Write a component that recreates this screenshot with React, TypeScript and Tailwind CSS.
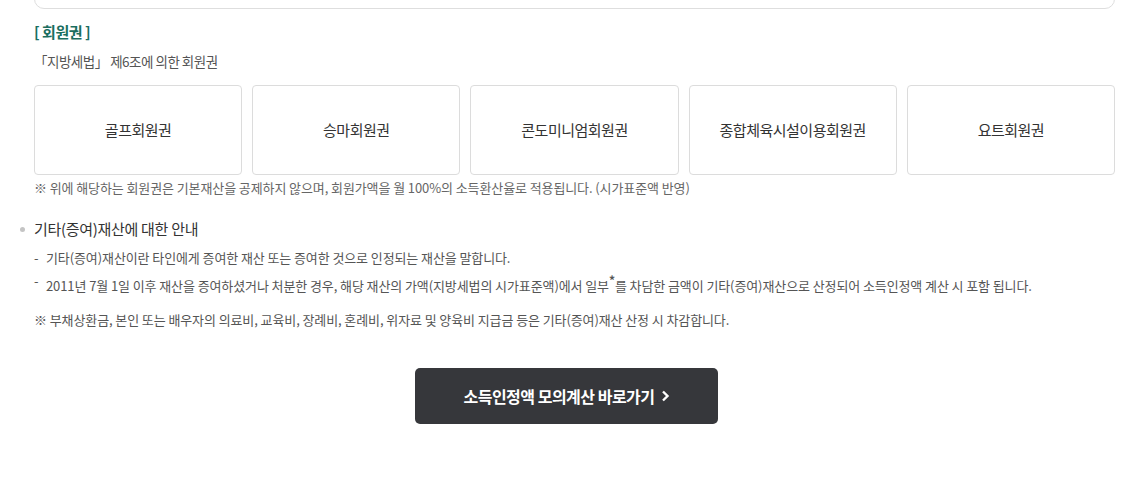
import React from "react";

const font = { fontFamily: '"Noto Sans CJK KR", "Noto Sans", sans-serif' };

const cards = ["골프회원권", "승마회원권", "콘도미니엄회원권", "종합체육시설이용회원권", "요트회원권"];

export default function App() {
  return (
    <div className="w-[1143px] h-[478px] bg-white overflow-hidden tracking-[-0.5px]" style={font}>
      <div className="pl-[34px] pr-[28px]">
        <div className="h-[40px] -mt-[31px] border border-[#dedede] rounded-[10px]" />

        <h3 className="mt-[12px] text-[15px] leading-[22px] font-bold text-[#1b6e5f]">[ 회원권 ]</h3>
        <p className="mt-[8px] text-[13.5px] leading-[20px] text-[#555]">「지방세법」 제6조에 의한 회원권</p>

        <div className="mt-[14px] grid grid-cols-5 gap-[10px]">
          {cards.map((c) => (
            <div
              key={c}
              className="h-[90px] border border-[#dcdcdc] rounded-[4px] flex items-center justify-center text-[15px] text-[#333]"
            >
              {c}
            </div>
          ))}
        </div>

        <p className="mt-[3px] text-[13px] leading-[20px] text-[#666] tracking-[-0.1px]">
          ※ 위에 해당하는 회원권은 기본재산을 공제하지 않으며, 회원가액을 월 100%의 소득환산율로 적용됩니다. (시가표준액 반영)
        </p>
      </div>

      <div className="mt-[20px] pl-[20px]">
        <div className="flex items-center gap-[9px]">
          <span className="w-[5px] h-[5px] rounded-full bg-[#c4c4c4]" />
          <span className="text-[15px] leading-[22px] text-[#333] tracking-[-0.3px]">기타(증여)재산에 대한 안내</span>
        </div>

        <ul className="mt-[8px] pl-[14px] text-[13px] text-[#555] tracking-[-0.1px]">
          <li className="flex leading-[20px]">
            <span className="w-[12px]">-</span>
            <span>기타(증여)재산이란 타인에게 증여한 재산 또는 증여한 것으로 인정되는 재산을 말합니다.</span>
          </li>
          <li className="flex leading-[20px] mt-[8px]">
            <span className="w-[12px] -mt-[5px]">-</span>
            <span>
              2011년 7월 1일 이후 재산을 증여하셨거나 처분한 경우, 해당 재산의 가액(지방세법의 시가표준액)에서 일부
              <sup className="text-[12px] font-bold">*</sup>를 차담한 금액이 기타(증여)재산으로 산정되어 소득인정액 계산 시 포함 됩니다.
            </span>
          </li>
        </ul>

        <p className="mt-[14px] pl-[14px] text-[13px] leading-[20px] text-[#555] tracking-[-0.1px]">
          ※ 부채상환금, 본인 또는 배우자의 의료비, 교육비, 장례비, 혼례비, 위자료 및 양육비 지급금 등은 기타(증여)재산 산정 시 차감합니다.
        </p>
      </div>

      <div className="mt-[38px] flex justify-center pr-[10px]">
        <button className="w-[303px] h-[56px] rounded-[5px] bg-[#36373b] text-white text-[16px] font-bold flex items-center justify-center gap-[6px]">
          소득인정액 모의계산 바로가기
          <svg width="9" height="12" viewBox="0 0 9 12" fill="none">
            <path d="M2 1.5L6.5 6L2 10.5" stroke="white" strokeWidth="2.4" />
          </svg>
        </button>
      </div>
    </div>
  );
}
